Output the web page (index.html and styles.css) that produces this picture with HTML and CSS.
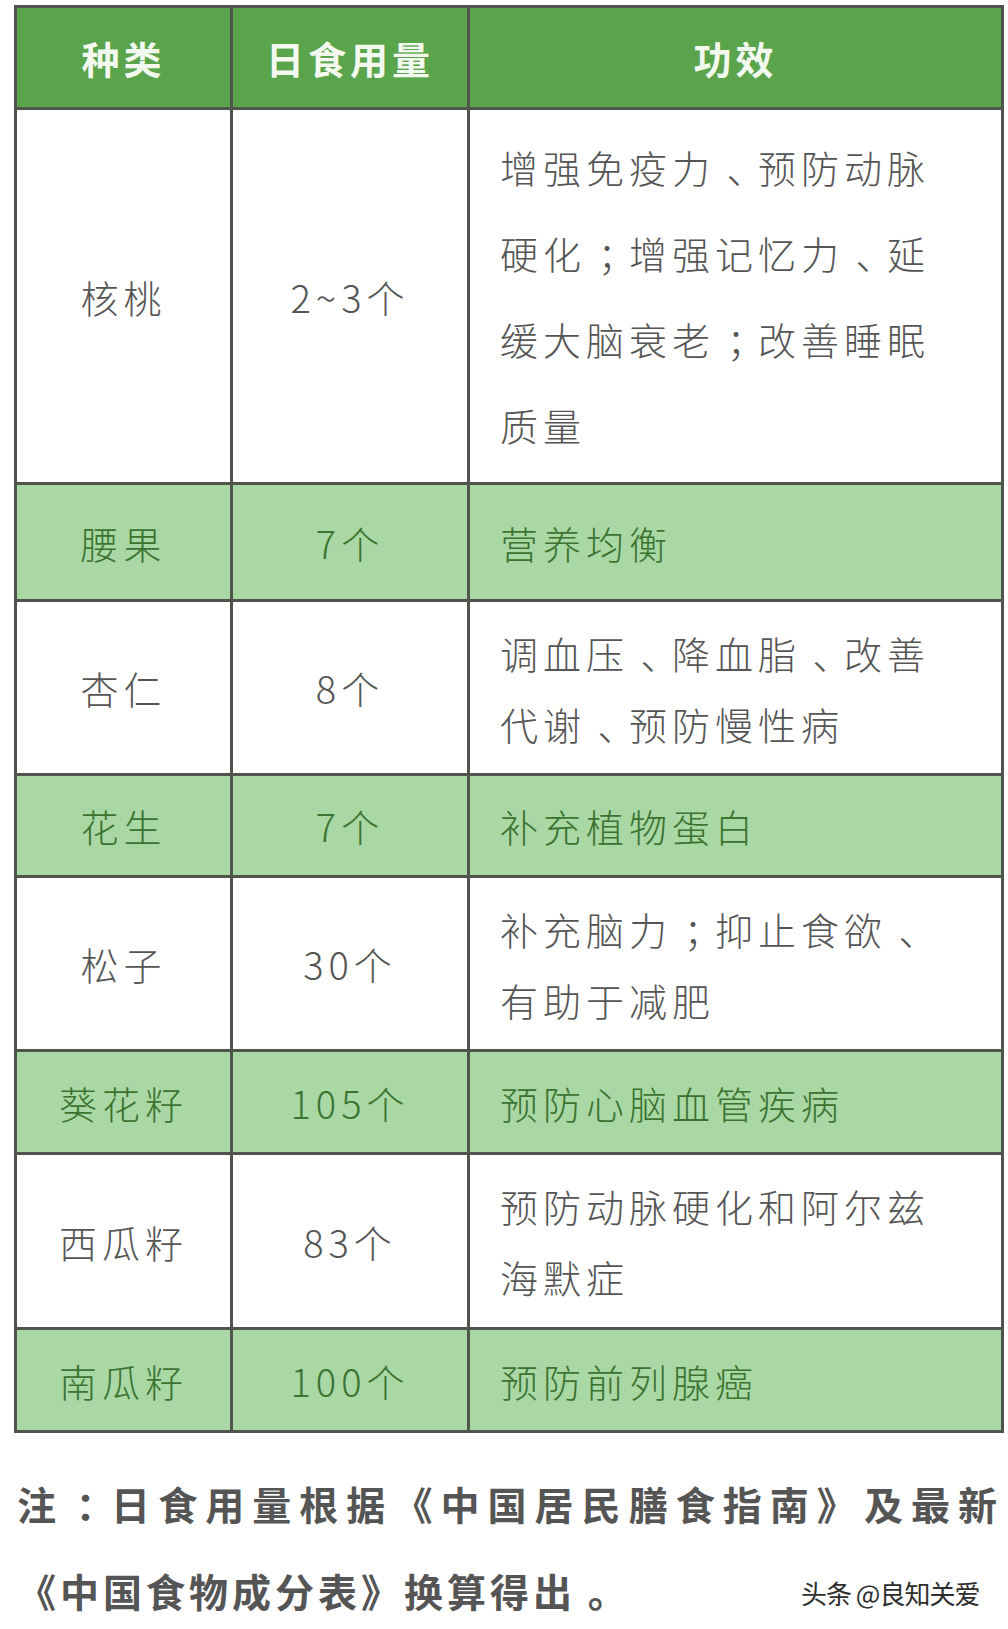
FILE: index.html
```html
<!DOCTYPE html>
<html lang="zh-CN">
<head>
<meta charset="utf-8">
<title>坚果日食用量</title>
<link rel="stylesheet" href="styles.css">
</head>
<body>
<main class="page">
  <table class="nut-table">
    <colgroup>
      <col class="c-kind">
      <col class="c-amount">
      <col class="c-effect">
    </colgroup>
    <thead>
      <tr class="row-head">
        <th>种类</th>
        <th>日食用量</th>
        <th>功效</th>
      </tr>
    </thead>
    <tbody>
      <tr class="row-white r-375">
        <td class="kind">核桃</td>
        <td class="amount">2~3个</td>
        <td class="effect tall">增强免疫力<span class="p">、</span>预防动脉<br>硬化<span class="p">；</span>增强记忆力<span class="p">、</span>延<br>缓大脑衰老<span class="p">；</span>改善睡眠<br>质量</td>
      </tr>
      <tr class="row-green r-117">
        <td class="kind">腰果</td>
        <td class="amount">7个</td>
        <td class="effect">营养均衡</td>
      </tr>
      <tr class="row-white r-174">
        <td class="kind">杏仁</td>
        <td class="amount">8个</td>
        <td class="effect">调血压<span class="p">、</span>降血脂<span class="p">、</span>改善<br>代谢<span class="p">、</span>预防慢性病</td>
      </tr>
      <tr class="row-green r-102">
        <td class="kind">花生</td>
        <td class="amount">7个</td>
        <td class="effect">补充植物蛋白</td>
      </tr>
      <tr class="row-white r-174">
        <td class="kind">松子</td>
        <td class="amount">30个</td>
        <td class="effect">补充脑力<span class="p">；</span>抑止食欲<span class="p">、</span><br>有助于减肥</td>
      </tr>
      <tr class="row-green r-103">
        <td class="kind">葵花籽</td>
        <td class="amount">105个</td>
        <td class="effect">预防心脑血管疾病</td>
      </tr>
      <tr class="row-white r-175">
        <td class="kind">西瓜籽</td>
        <td class="amount">83个</td>
        <td class="effect">预防动脉硬化和阿尔兹<br>海默症</td>
      </tr>
      <tr class="row-green r-103">
        <td class="kind">南瓜籽</td>
        <td class="amount">100个</td>
        <td class="effect">预防前列腺癌</td>
      </tr>
    </tbody>
  </table>

  <div class="note">
    <span class="note-line justify">注<span class="p">：</span>日食用量根据《中国居民膳食指南》及最新</span>
    <span class="note-line">《中国食物成分表》换算得出<span class="p">。</span></span>
  </div>

  <div class="watermark">头条 @良知关爱</div>
</main>
</body>
</html>
```

FILE: styles.css
```css
html, body {
  margin: 0;
  padding: 0;
  background: #ffffff;
}

body {
  font-family: "Noto Sans CJK SC", "Noto Sans", sans-serif;
  color: #555555;
}

.page {
  position: relative;
  width: 1008px;
  height: 1629px;
  box-sizing: border-box;
  padding: 5px 7px 0 14px;
}

.nut-table {
  width: 987px;
  border-collapse: collapse;
  table-layout: fixed;
}

.c-kind { width: 216px; }
.c-amount { width: 237px; }
.c-effect { width: 534px; }

.nut-table th,
.nut-table td {
  border: 3px solid #4f554c;
  padding: 0;
  font-size: 38px;
  letter-spacing: 5px;
  vertical-align: middle;
}

.row-head {
  height: 102px;
  background: #5aa44c;
}

.row-head th {
  color: #f3f9ef;
  font-weight: 700;
  text-align: center;
  letter-spacing: 4px;
}

.r-375 { height: 375px; }
.r-117 { height: 117px; }
.r-174 { height: 174px; }
.r-175 { height: 175px; }
.r-102 { height: 102px; }
.r-103 { height: 103px; }

.row-white {
  background: #ffffff;
  color: #555555;
}

.row-green {
  background: #a9d8a4;
  color: #3b7330;
}

.kind,
.amount {
  text-align: center;
  font-weight: 300;
}

.effect {
  text-align: left;
  font-weight: 300;
  padding-left: 30px !important;
  line-height: 71px;
}

.effect.tall {
  line-height: 86px;
}

/* centre full-width punctuation inside its em box, keeping its advance */
.nut-table .p {
  padding-left: 0.3em;
  letter-spacing: calc(5px - 0.3em);
}

.note .p {
  padding-left: 0.3em;
  letter-spacing: calc(4px - 0.3em);
}

.note {
  width: 984px;
  margin: 27px 0 0 3px;
  font-size: 39px;
  font-weight: 700;
  letter-spacing: 4px;
  line-height: 87px;
  color: #555555;
}

.note-line {
  display: block;
  white-space: nowrap;
}

.note-line.justify {
  text-align: justify;
  text-align-last: justify;
  white-space: normal;
}

.watermark {
  position: absolute;
  left: 801px;
  top: 1574px;
  font-size: 26px;
  letter-spacing: -1px;
  color: #2e2e2e;
  text-shadow: 0 0 2px #ffffff, 0 0 1px #ffffff;
  font-family: "Noto Sans CJK SC", sans-serif;
}
```
